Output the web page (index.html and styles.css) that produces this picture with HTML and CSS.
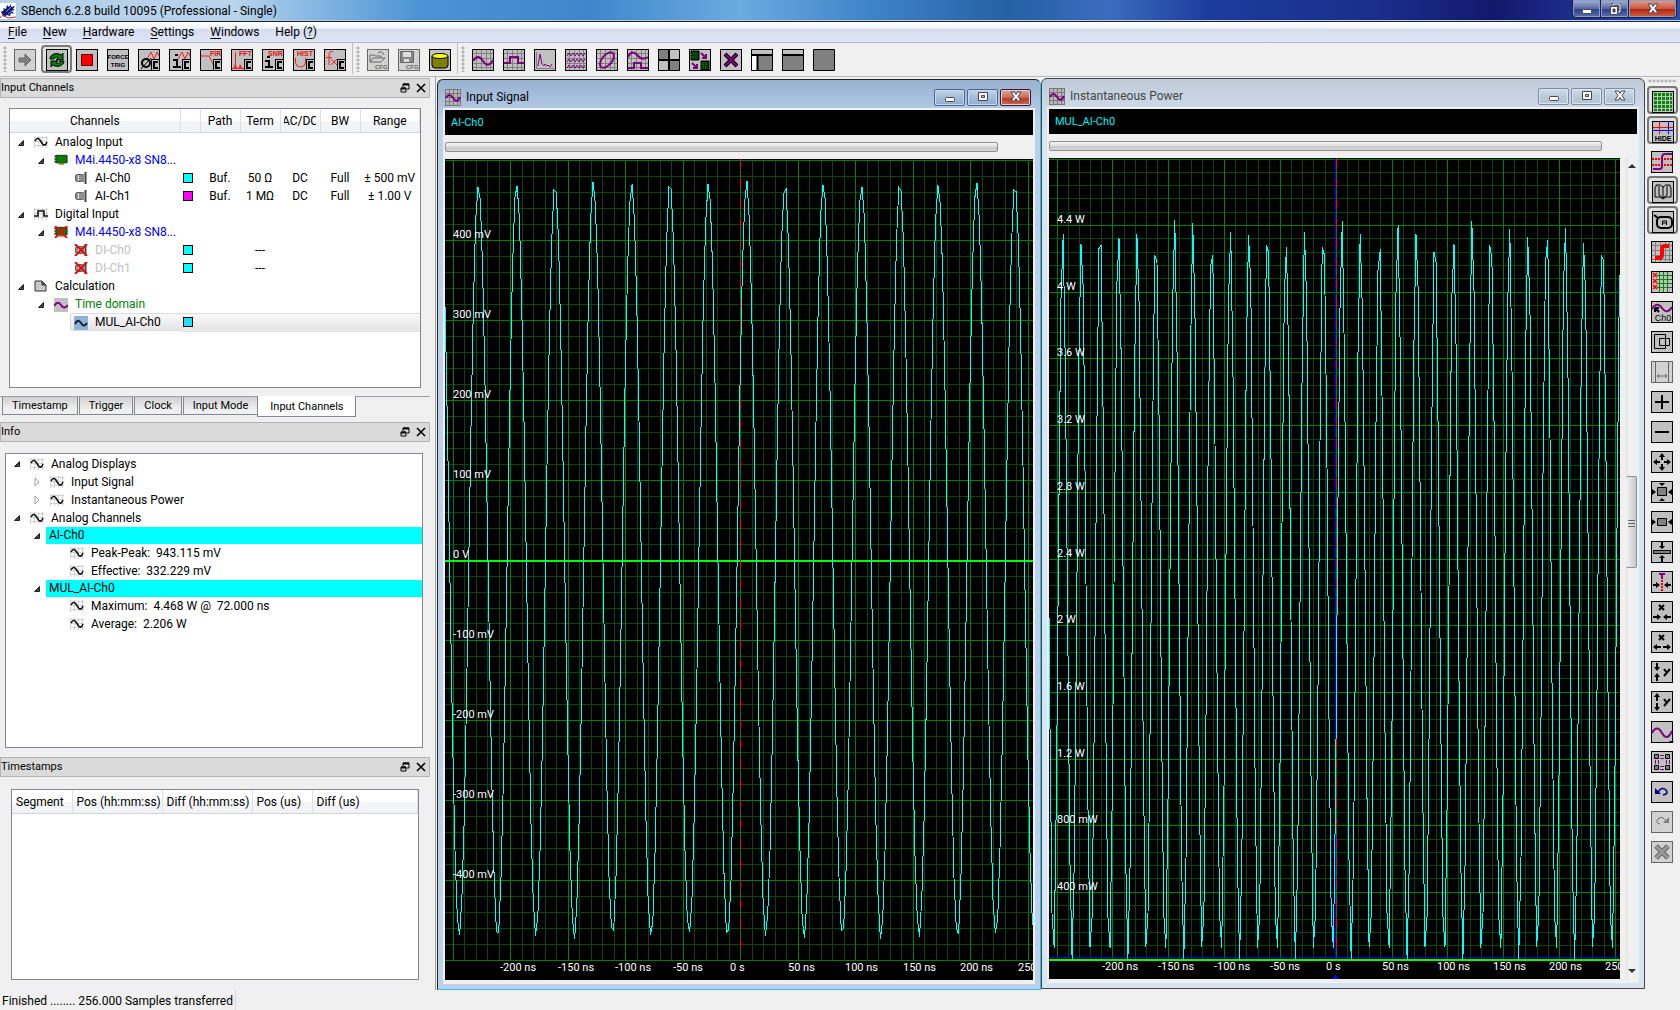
FILE: index.html
```html
<!DOCTYPE html>
<html lang="en">
<head>
<meta charset="utf-8">
<title>SBench 6.2.8 build 10095 (Professional - Single)</title>
<link rel="stylesheet" href="styles.css">
</head>
<body>
<svg class="defs" aria-hidden="true">
  <symbol id="box" viewBox="0 0 22 22"><rect x=".5" y=".5" width="21" height="21" fill="#c0c0c0" stroke="#000"/></symbol>
  <symbol id="boxd" viewBox="0 0 22 22"><rect x=".5" y=".5" width="21" height="21" fill="#d2d2d2" stroke="#666"/></symbol>
  <symbol id="gridbox" viewBox="0 0 22 22"><rect x=".5" y=".5" width="21" height="21" fill="#c0c0c0" stroke="#000"/><path d="M4.500 1v20M9.500 1v20M14.500 1v20M18.500 1v20M1 4.500h20M1 9.500h20M1 14.500h20M1 18.500h20" stroke="#808080" fill="none"/></symbol>
  <symbol id="chip" viewBox="0 0 22 22"><rect x="13.500" y="10.500" width="8" height="11" fill="#c0c0c0" stroke="#000"/><path d="M20 13h-4v6h4" stroke="#000" stroke-width="2" fill="none"/></symbol>
  <symbol id="wave" viewBox="0 0 14 12"><path d="M.5 0v12M4.500 0v12M8.500 0v12M12.500 0v12M0 1.500h14M0 5.500h14M0 9.500h14" stroke="#d0d0d0" fill="none"/><path d="M1 5Q3.500 .5 6 4L8.500 8Q11 11 13 6" stroke="#111" stroke-width="1.600" fill="none"/></symbol>
  <symbol id="square" viewBox="0 0 14 12"><path d="M.5 0v12M4.500 0v12M8.500 0v12M12.500 0v12M0 1.500h14M0 5.500h14M0 9.500h14" stroke="#d0d0d0" fill="none"/><path d="M0 8h4V3h6v5h4" stroke="#111" stroke-width="1.600" fill="none"/></symbol>
  <symbol id="card" viewBox="0 0 15 12"><path d="M0 2h3M0 5h3M0 8h3" stroke="#333"/><path d="M2 1h12v8H2z" fill="#008000" stroke="#222"/><path d="M5 10h6" stroke="#8a7a20" stroke-width="2"/></symbol>
  <symbol id="plug" viewBox="0 0 14 12"><rect x="1.500" y="2.500" width="8" height="7" rx="2" fill="#909090" stroke="#555"/><path d="M4.500 3v6" stroke="#ddd"/><path d="M8 2h2v8H8z" fill="#888"/><path d="M11.500 0v12" stroke="#444" stroke-width="2"/></symbol>
  <symbol id="cross" viewBox="0 0 14 12"><path d="M1 0L13 12M13 0L1 12" stroke="#f00808" stroke-width="2"/></symbol>
  <symbol id="doc" viewBox="0 0 14 12"><path d="M1 1h7l4 4v6H1z" fill="#c8c8c8" stroke="#333"/><path d="M8 1v4h4" fill="#555" stroke="#333"/></symbol>
  <symbol id="open" viewBox="0 0 8 8"><path d="M6.500 1.500v5h-5z" fill="#444" stroke="#222"/></symbol>
  <symbol id="shut" viewBox="0 0 8 8"><path d="M2 0l4 4-4 4z" fill="#fff" stroke="#a0a0a0"/></symbol>
  <symbol id="float" viewBox="0 0 10 10"><path d="M3 4V1h6v5H7" fill="none" stroke="#000"/><path d="M3 1.500h6M1 5.500h5" stroke="#000" stroke-width="2"/><path d="M1 5h5v4H1z" fill="none" stroke="#000"/></symbol>
  <symbol id="x" viewBox="0 0 10 10"><path d="M1 1l8 8M9 1L1 9" stroke="#000" stroke-width="1.600"/></symbol>
  <symbol id="plotwin" viewBox="0 0 16 17"><path d="M0 0h16v17H0z" fill="#b8b8b8"/><path d="M.5 0v17M4.500 0v17M8.500 0v17M12.500 0v17M15.500 0v17M0 .5h16M0 4.500h16M0 8.500h16M0 12.500h16M0 16.500h16" stroke="#777"/><path d="M1 9Q4 3 8 9T15 8" stroke="#800080" stroke-width="2" fill="none"/></symbol>
  <symbol id="wmin" viewBox="0 0 12 12"><rect x="1.500" y="6.500" width="9" height="4" rx="1" fill="#fff" stroke="#445"/></symbol>
  <symbol id="wmax" viewBox="0 0 12 12"><path d="M1.500 1.500h9v8h-9zM4.500 4.500h3v2h-3z" fill="#fff" fill-rule="evenodd" stroke="#445"/></symbol>
  <symbol id="wx" viewBox="0 0 12 12"><path d="M1 1h3.500L6 3.500 7.500 1H11L8 5.500 11 10H7.500L6 7.500 4.500 10H1l3-4.500z" fill="#fff" stroke="#445"/></symbol>
  <symbol id="wrest" viewBox="0 0 12 12"><path d="M4 3V1h7v8H9" fill="none" stroke="#445" stroke-width="3"/><path d="M4 3V1h7v8H9" fill="none" stroke="#fff"/><path d="M1.500 3.500h7v8h-7zM4 6h2v3H4z" fill="#fff" fill-rule="evenodd" stroke="#445"/></symbol>
</svg>

<div class="app">
  <header class="titlebar">
    <svg class="logo" viewBox="0 0 16 16"><path d="M0 0h16v16H0z" fill="#fff"/><path d="M1 9l3-2-1-2 3 1 1-4 2 2 2-3v3l4-1-2 3 2 1-3 1 2 3-3-1-1 3-3-1-3 2z" fill="#101878"/><path d="M6 9l5-5M8 11l5-4" stroke="#8090d0"/><path d="M0 15q3-5 6-1l3 1 7-1" stroke="#e02020" fill="none"/></svg>
    <h1>SBench 6.2.8 build 10095 (Professional - Single)</h1>
    <div class="syskeys">
      <button aria-label="Minimize"><svg width="12" height="12"><use href="#wmin"/></svg></button>
      <button aria-label="Restore"><svg width="12" height="12"><use href="#wrest"/></svg></button>
      <button class="close" aria-label="Close"><svg width="12" height="12"><use href="#wx"/></svg></button>
    </div>
  </header>

  <nav class="menubar">
    <button><u>F</u>ile</button><button><u>N</u>ew</button><button><u>H</u>ardware</button><button><u>S</u>ettings</button><button><u>W</u>indows</button><button>Help (<u>?</u>)</button>
  </nav>

  <div class="toolbar">
    <div class="group">
      <span class="grip"></span>
      <button class="tool" aria-label="Start"><svg><use href="#boxd"/><path d="M5 9h6V5l6 6-6 6v-4H5z" fill="#808080" stroke="#666"/></svg></button>
      <button class="tool on" aria-label="Loop"><svg><use href="#box"/><path d="M4 10c0-5 7-7 11-4l2-2v7h-7l2-2c-2-1-4 0-4 1z" fill="#087808" stroke="#000"/><path d="M18 12c0 5-7 7-11 4l-2 2v-6h7l-2 2c2 1 4 0 4-2z" fill="#087808" stroke="#000"/></svg></button>
      <button class="tool" aria-label="Stop"><svg><use href="#box"/><path d="M5.500 5.500h11v11h-11z" fill="#f00" stroke="#600"/></svg></button>
      <button class="tool" aria-label="Force trigger"><svg><use href="#box"/><text x="11" y="10" class="t6" text-anchor="middle">FORCE</text><text x="11" y="18" class="t6" text-anchor="middle">TRIG</text></svg></button>
      <button class="tool" aria-label="Average"><svg><use href="#box"/><path d="M9 10l4-7 3 7 3-7 2 4" class="r"/><circle cx="8" cy="14" r="4" class="k2"/><path d="M3 20L13 9" class="k"/><use href="#chip"/></svg></button>
      <button class="tool" aria-label="Signal info"><svg><use href="#box"/><path d="M9 10l4-7 3 7 3-7 2 4" class="r"/><path d="M6 6h3M4 11h4v6M4 18h8" class="k2"/><use href="#chip"/></svg></button>
      <button class="tool" aria-label="FIR filter"><svg><use href="#box"/><path d="M1 7h8l6 12" class="r"/><text x="10" y="7" class="t7 rt">FIR</text><use href="#chip"/></svg></button>
      <button class="tool" aria-label="FFT"><svg><use href="#box"/><path d="M4.500 3v17M1 19.500h12" class="r"/><path d="M2 20l2-5 3 5 2-5 3 5z" fill="#f22"/><text x="8" y="7" class="t7 rt">FFT</text><use href="#chip"/></svg></button>
      <button class="tool" aria-label="SNR"><svg><use href="#box"/><path d="M5 8h3M3 12h4v5M3 18h8" class="k2"/><text x="6" y="7" class="t7 rt">SNR</text><use href="#chip"/></svg></button>
      <button class="tool" aria-label="Histogram"><svg><use href="#box"/><path d="M2.500 9v5q1 4 5 4t5-4V9" class="r"/><text x="4" y="7" class="t7 rt">HIST</text><use href="#chip"/></svg></button>
      <button class="tool" aria-label="Function"><svg><use href="#box"/><path d="M9 3q-4-2-4 3v10M2 8.500h6M7 10l6 6M13 10l-6 6" class="r"/><use href="#chip"/></svg></button>
    </div>
    <div class="group">
      <span class="grip"></span>
      <button class="tool" aria-label="Load configuration"><svg><use href="#boxd"/><path d="M3 13V6h4l1 1h6v2M3 13l3-4h12l-4 4zM11 4q4-3 6 2" class="d"/><text x="8" y="20" class="t6 dt">CFG</text></svg></button>
      <button class="tool" aria-label="Save configuration"><svg><use href="#boxd"/><path d="M2.500 2.500h13v11h-13z" fill="#888" stroke="#666"/><path d="M5 3h8v5H5zM6 10h5v3H6z" fill="#ddd"/><text x="8" y="20" class="t6 dt">CFG</text></svg></button>
      <button class="tool" aria-label="Archive"><svg><use href="#box"/><path d="M3 7v9q0 3 3 3h10q3 0 3-3V7z" fill="#808000" stroke="#000"/><ellipse cx="11" cy="7" rx="8" ry="2.500" fill="#ff0" stroke="#000"/></svg></button>
    </div>
    <div class="group last">
      <span class="grip"></span>
      <button class="tool" aria-label="Analog display"><svg><use href="#gridbox"/><path d="M1 12Q6 4 11 12T21 11" class="p2"/></svg></button>
      <button class="tool" aria-label="Digital display"><svg><use href="#gridbox"/><path d="M1 14h6V8h8v6h6" class="p2"/></svg></button>
      <button class="tool" aria-label="Spectrum display"><svg><use href="#box"/><path d="M2.500 3v16.500H20" stroke="#808080" fill="none"/><path d="M4 17l2-12 2 10 2 2 1-2 2 2 1-1 2 2 2-3" class="p"/></svg></button>
      <button class="tool" aria-label="Multi display"><svg><use href="#gridbox"/><path d="M2 7l2-3 2 3 2-3 2 3 2-3 2 3 2-3 2 3 2-3M2 13l2-3 2 3 2-3 2 3 2-3 2 3 2-3 2 3 2-3M2 19l2-3 2 3 2-3 2 3 2-3 2 3 2-3 2 3 2-3" class="p"/></svg></button>
      <button class="tool" aria-label="XY display"><svg><use href="#gridbox"/><ellipse cx="11" cy="11" rx="9" ry="5" transform="rotate(-50 11 11)" class="p2"/></svg></button>
      <button class="tool" aria-label="Mixed display"><svg><use href="#gridbox"/><path d="M1 8Q5 0 10 6t11 2M1 19h6v-5h7v5h7" class="p2"/></svg></button>
      <button class="tool" aria-label="Tile windows"><svg><use href="#box"/><path d="M1 1h9v9H1zM12 12h9v9h-9z" fill="#808080"/><path d="M11 0v22M0 11h22" class="k2"/></svg></button>
      <button class="tool" aria-label="Cascade windows"><svg><use href="#box"/><path d="M2 2h8v9H2zM12 12h8v9h-8z" fill="#002800" stroke="#000"/><path d="M4 3v7M7 3v7M14 13v7M17 13v7M2 5h8M2 8h8M12 15h8M12 18h8" stroke="#080" stroke-dasharray="1 1"/><path d="M12 4l5 5m0-4v4h-4M3 14l5 5m0-4v4H4" class="p2"/></svg></button>
      <button class="tool" aria-label="Close windows"><svg><use href="#box"/><path d="M5 5l12 12M17 5L5 17" stroke="#000" stroke-width="4"/><path d="M5 5l12 12M17 5L5 17" class="p2"/></svg></button>
      <button class="tool" aria-label="Layout with side bar"><svg><use href="#box"/><path d="M7 7h14v14H7z" fill="#808080"/><path d="M1 7h5v14H1z" fill="#fff"/><path d="M1 6h20M6.500 6v15" class="k2"/></svg></button>
      <button class="tool" aria-label="Layout with top bar"><svg><use href="#box"/><path d="M1 7h20v14H1z" fill="#808080"/><path d="M1 6h20" class="k2"/></svg></button>
      <button class="tool" aria-label="Full layout"><svg><path d="M.5 .5h21v21H.5z" fill="#808080" stroke="#000"/></svg></button>
    </div>
  </div>

  <main class="work">
    <aside class="docks">
      <section>
        <div class="docktitle"><h2>Input Channels</h2><button aria-label="Float"><svg><use href="#float"/></svg></button><button aria-label="Close"><svg><use href="#x"/></svg></button></div>
        <div class="frame channels">
          <table>
            <colgroup><col class="cname"><col class="ccol"><col class="c40"><col class="c40"><col class="c40"><col class="c40"><col></colgroup>
            <thead><tr><th>Channels</th><th></th><th>Path</th><th>Term</th><th><span class="clip">AC/DC</span></th><th>BW</th><th>Range</th></tr></thead>
            <tbody>
              <tr class="spacer"><td colspan="7"></td></tr>
              <tr><td class="l0"><svg class="ar"><use href="#open"/></svg><svg class="ic"><use href="#wave"/></svg>Analog Input</td><td colspan="6"></td></tr>
              <tr><td class="l1 blue"><svg class="ar"><use href="#open"/></svg><svg class="ic"><use href="#card"/></svg>M4i.4450-x8 SN8...</td><td colspan="6"></td></tr>
              <tr><td class="l2"><svg class="ic"><use href="#plug"/></svg>AI-Ch0</td><td><i class="sw"></i></td><td>Buf.</td><td>50 Ω</td><td>DC</td><td>Full</td><td>± 500 mV</td></tr>
              <tr><td class="l2"><svg class="ic"><use href="#plug"/></svg>AI-Ch1</td><td><i class="sw magenta"></i></td><td>Buf.</td><td>1 MΩ</td><td>DC</td><td>Full</td><td>± 1.00 V</td></tr>
              <tr><td class="l0"><svg class="ar"><use href="#open"/></svg><svg class="ic"><use href="#square"/></svg>Digital Input</td><td colspan="6"></td></tr>
              <tr><td class="l1 blue"><svg class="ar"><use href="#open"/></svg><svg class="ic"><use href="#card"/><use href="#cross"/></svg>M4i.4450-x8 SN8...</td><td colspan="6"></td></tr>
              <tr><td class="l2 off"><svg class="ic"><use href="#plug"/><use href="#cross"/></svg>DI-Ch0</td><td><i class="sw"></i></td><td></td><td>---</td><td></td><td></td><td></td></tr>
              <tr><td class="l2 off"><svg class="ic"><use href="#plug"/><use href="#cross"/></svg>DI-Ch1</td><td><i class="sw"></i></td><td></td><td>---</td><td></td><td></td><td></td></tr>
              <tr><td class="l0"><svg class="ar"><use href="#open"/></svg><svg class="ic"><use href="#doc"/></svg>Calculation</td><td colspan="6"></td></tr>
              <tr><td class="l1 green"><svg class="ar"><use href="#open"/></svg><svg class="ic tile"><path d="M0 8Q4 2 7 7t7 0" class="p2"/></svg>Time domain</td><td colspan="6"></td></tr>
              <tr class="sel"><td class="l2"><div><svg class="ic tile seltile"><path d="M1 8Q4 2 7 7t6 0" stroke="#123" stroke-width="2" fill="none"/></svg>MUL_AI-Ch0</div></td><td><i class="sw picked"></i></td><td colspan="5"></td></tr>
            </tbody>
          </table>
        </div>
        <div class="tabs" role="tablist"><button role="tab">Timestamp</button><button role="tab">Trigger</button><button role="tab">Clock</button><button role="tab">Input Mode</button><button role="tab" aria-selected="true">Input Channels</button></div>
      </section>

      <section>
        <div class="docktitle"><h2>Info</h2><button aria-label="Float"><svg><use href="#float"/></svg></button><button aria-label="Close"><svg><use href="#x"/></svg></button></div>
        <ul class="frame info">
          <li class="l0"><svg class="ar"><use href="#open"/></svg><svg class="ic"><use href="#wave"/></svg>Analog Displays</li>
          <li class="l1"><svg class="ar"><use href="#shut"/></svg><svg class="ic"><use href="#wave"/></svg>Input Signal</li>
          <li class="l1"><svg class="ar"><use href="#shut"/></svg><svg class="ic"><use href="#wave"/></svg>Instantaneous Power</li>
          <li class="l0"><svg class="ar"><use href="#open"/></svg><svg class="ic"><use href="#wave"/></svg>Analog Channels</li>
          <li class="l1 ch"><svg class="ar"><use href="#open"/></svg><span>AI-Ch0</span></li>
          <li class="l2"><svg class="ic"><use href="#wave"/></svg>Peak-Peak:&nbsp; 943.115 mV</li>
          <li class="l2"><svg class="ic"><use href="#wave"/></svg>Effective:&nbsp; 332.229 mV</li>
          <li class="l1 ch"><svg class="ar"><use href="#open"/></svg><span>MUL_AI-Ch0</span></li>
          <li class="l2"><svg class="ic"><use href="#wave"/></svg>Maximum:&nbsp; 4.468 W @&nbsp; 72.000 ns</li>
          <li class="l2"><svg class="ic"><use href="#wave"/></svg>Average:&nbsp; 2.206 W</li>
        </ul>
      </section>

      <section>
        <div class="docktitle"><h2>Timestamps</h2><button aria-label="Float"><svg><use href="#float"/></svg></button><button aria-label="Close"><svg><use href="#x"/></svg></button></div>
        <div class="frame stamps">
          <table>
            <colgroup><col class="c60"><col class="c90"><col class="c90"><col class="c60"><col></colgroup>
            <thead><tr><th>Segment</th><th>Pos (hh:mm:ss)</th><th>Diff (hh:mm:ss)</th><th>Pos (us)</th><th>Diff (us)</th></tr></thead>
          </table>
        </div>
      </section>
    </aside>

    <div class="mdi">
      <section class="win active">
        <div class="wintitle"><svg class="wi"><use href="#plotwin"/></svg><h2>Input Signal</h2>
          <button aria-label="Minimize"><svg><use href="#wmin"/></svg></button><button aria-label="Maximize"><svg><use href="#wmax"/></svg></button><button class="close" aria-label="Close"><svg><use href="#wx"/></svg></button></div>
        <div class="content">
          <div class="legend">AI-Ch0</div>
          <div class="hbar"></div>
          <div class="plotrow"><div class="plot" id="signal"></div></div>
        </div>
      </section>
      <section class="win">
        <div class="wintitle"><svg class="wi"><use href="#plotwin"/></svg><h2>Instantaneous Power</h2>
          <button aria-label="Minimize"><svg><use href="#wmin"/></svg></button><button aria-label="Maximize"><svg><use href="#wmax"/></svg></button><button aria-label="Close"><svg><use href="#wx"/></svg></button></div>
        <div class="content">
          <div class="legend">MUL_AI-Ch0</div>
          <div class="hbar"></div>
          <div class="plotrow"><div class="plot" id="power"></div>
            <div class="vbar"><svg viewBox="0 0 10 6"><path d="M1 5l4-4 4 4z" fill="#333"/></svg><span class="thumb"></span><svg viewBox="0 0 10 6"><path d="M1 1l4 4 4-4z" fill="#333"/></svg></div></div>
        </div>
      </section>
    </div>

    <div class="sidebar">
      <span class="grip"></span>
      <button class="tool on" aria-label="Grid"><svg><use href="#box"/><path d="M2 2h18v18H2z" fill="#008a00"/><path d="M5.500 1v20M9.500 1v20M13.500 1v20M17.500 1v20M1 5.500h20M1 9.500h20M1 13.500h20M1 17.500h20" stroke="#c0c0c0"/></svg></button>
      <button class="tool on" aria-label="Hide cursors"><svg><use href="#box"/><path d="M1 6.500h20M7.500 1v12" stroke="#f00"/><path d="M1 9.500h20M16.500 1v12" stroke="#00f"/><text x="11" y="20" class="t7" text-anchor="middle">HIDE</text></svg></button>
      <button class="tool" aria-label="Trigger level"><svg><use href="#box"/><path d="M1 8h20M1 14h20" stroke="#f00" stroke-width="2" stroke-dasharray="2 1"/><path d="M2 18h7q2 0 2-3V7q0-4 3-4h7" class="p2"/></svg></button>
      <button class="tool on" aria-label="Legend"><svg><use href="#box"/><path d="M3 16V7q0-1 1-1V4q5-1 7 2 2-3 7-2v2q1 0 1 1v9h-5l-3 2-3-2zM11 6v11M7 5v9l4 3 4-3V5" class="k"/></svg></button>
      <button class="tool on" aria-label="Auto label"><svg><use href="#box"/><rect x="5" y="6" width="15" height="11" rx="4" class="k2"/><path d="M2 4l4 3" class="k2"/><path d="M10.500 14v-4h4v4M10.500 12h4" class="k"/></svg></button>
      <button class="tool" aria-label="Interpolation"><svg><use href="#gridbox"/><path d="M4 17h4q3 0 3-3V8q0-3 3-3h4" stroke="#f00" stroke-width="4" fill="none"/></svg></button>
      <button class="tool" aria-label="Clear markers"><svg><use href="#box"/><path d="M8.500 1v20M12.500 1v20M16.500 1v20M6 4.500h15M6 8.500h15M6 12.500h15M6 16.500h15" stroke="#080"/><path d="M2 2l4 4M6 2L2 6M2 8l4 4M6 8l-4 4M2 14l4 4M6 14l-4 4" stroke="#f00" stroke-width="1.500"/></svg></button>
      <button class="tool" aria-label="Select channel"><svg><use href="#box"/><path d="M1 8Q6 0 11 7t10-1" class="p2"/><path d="M4 7h4M4 7v4M4 7l4 4" class="k2"/><text x="12" y="20" class="t8" text-anchor="middle">Ch0</text></svg></button>
      <button class="tool" aria-label="Overlay"><svg><use href="#box"/><path d="M3.500 3.500h11v14h-11zM8.500 7.500h10v7h-10z" class="k"/></svg></button>
      <button class="tool" aria-label="Fit width"><svg><use href="#boxd"/><path d="M4.500 1v20M17.500 1v20M6 15h10M8 13l-2 2 2 2M14 13l2 2-2 2" class="d"/></svg></button>
      <button class="tool" aria-label="Zoom in"><svg><use href="#box"/><path d="M11 4v14M4 11h14" class="k2"/></svg></button>
      <button class="tool" aria-label="Zoom out"><svg><use href="#box"/><path d="M4 11h14" class="k2"/></svg></button>
      <button class="tool" aria-label="Move"><svg><use href="#box"/><path d="M11 3v6M11 13v6M3 11h6M13 11h6" class="k2"/><path d="M8 6l3-4 3 4zM8 16l3 4 3-4zM6 8l-4 3 4 3zM16 8l4 3-4 3z"/></svg></button>
      <button class="tool" aria-label="Fit all"><svg><use href="#box"/><path d="M6.500 6.500h9v8h-9z" fill="#808080" stroke="#000"/><path d="M8 2h6l-3 3zM8 20h6l-3-3zM1 8v6l4-3zM21 8v6l-4-3z"/></svg></button>
      <button class="tool" aria-label="Fit horizontal"><svg><use href="#box"/><path d="M6.500 7.500h9v7h-9z" fill="#808080" stroke="#000"/><path d="M1 8v6l4-3zM21 8v6l-4-3z"/></svg></button>
      <button class="tool" aria-label="Fit vertical"><svg><use href="#box"/><path d="M2.500 9.500h17v3h-17z" fill="#808080" stroke="#000"/><path d="M11 1v4M11 17v4" class="k2"/><path d="M8 5h6l-3 3zM8 17h6l-3-3z"/></svg></button>
      <button class="tool" aria-label="Center trigger"><svg><use href="#box"/><path d="M8 3h6M11 3v5" class="p2"/><path d="M11 9v12" stroke="#f00" stroke-width="2" stroke-dasharray="2 1"/><path d="M2 14h4M16 14h4" class="k2"/><path d="M5 11l4 3-4 3zM17 11l-4 3 4 3z"/></svg></button>
      <button class="tool" aria-label="Compress X"><svg><use href="#box"/><path d="M8 4l5 5M13 4L8 9M2 16h5M15 16h5" class="k2"/><path d="M6 13l4 3-4 3zM16 13l-4 3 4 3z"/></svg></button>
      <button class="tool" aria-label="Expand X"><svg><use href="#box"/><path d="M8 4l5 5M13 4L8 9M5 16h5M12 16h5" class="k2"/><path d="M6 13l-4 3 4 3zM16 13l4 3-4 3z"/></svg></button>
      <button class="tool" aria-label="Compress Y"><svg><use href="#box"/><path d="M13 8l3 4M19 8l-6 7M6 2v4M6 16v4" class="k2"/><path d="M3 6h6l-3 4zM3 16h6l-3-4z"/></svg></button>
      <button class="tool" aria-label="Expand Y"><svg><use href="#box"/><path d="M13 8l3 4M19 8l-6 7M6 5v5M6 12v5" class="k2"/><path d="M3 6h6l-3-4zM3 16h6l-3 4z"/></svg></button>
      <button class="tool" aria-label="Waveform style"><svg><use href="#box"/><path d="M1 12Q6 3 11 12t10-2" class="p2"/><path d="M18 20h5l-2.500 2z"/></svg></button>
      <button class="tool" aria-label="Link displays"><svg><use href="#box"/><path d="M3.500 3.500h4v4h-4zM14.500 3.500h4v4h-4zM3.500 14.500h4v4h-4zM14.500 14.500h4v4h-4z" fill="#808080" stroke="#000"/><path d="M9 4.500h4M9 7.500h4M9 15.500h4M9 18.500h4M4.500 9v4M7.500 9v4M15.500 9v4M18.500 9v4" class="p"/></svg></button>
      <button class="tool" aria-label="Undo"><svg><use href="#box"/><path d="M7 11q4-6 8-2 3 4-3 5" stroke="#000080" stroke-width="1.500" fill="none"/><path d="M4 7v6h6z" fill="#000080"/></svg></button>
      <button class="tool" aria-label="Redo"><svg><use href="#boxd"/><path d="M15 10q-4-6-8-2-3 4 2 5" class="d"/><path d="M18 6v6h-6z" fill="#808080"/></svg></button>
      <button class="tool" aria-label="Delete"><svg><use href="#boxd"/><path d="M5 5l12 12M17 5L5 17" stroke="#666" stroke-width="5"/><path d="M5 5l12 12M17 5L5 17" stroke="#999" stroke-width="3"/></svg></button>
    </div>
  </main>

  <footer class="status"><span>Finished ........ 256.000 Samples transferred</span></footer>
</div>
<script src="plot.js"></script>
</body>
</html>
```
FILE: styles.css
```css
* { box-sizing: border-box; }
body { margin: 0; font: 12px/18px Roboto, "Noto Sans", sans-serif; color: #000; background: #f0f0f0; }
h1, h2 { margin: 0; font: inherit; }
button { margin: 0; padding: 0; border: 0; background: none; font: inherit; color: inherit; }
svg { display: block; flex: none; }
.defs { position: absolute; width: 0; height: 0; }
.app { display: flex; flex-direction: column; height: 100vh; min-height: 900px; overflow: hidden; }

/* title and menu */
.titlebar { display: flex; align-items: center; height: 22px; flex: none; border-bottom: 1px solid #1c2438; box-shadow: inset 0 -1px #b8cce8;
  background: linear-gradient(90deg, #b4cfe8 0, #b9d3ec 14%, #8cbbe4 18%, #4b93d4 25%, #3f86cc 35%, #6aabe0 44%, #3f83c8 52%, #2560a4 60%, #3c6cc0 66%, #1c3c9c 72%, #1a2e8c 82%, #14186c 89%, #20389c 96%, #2c50a4 100%); }
.logo { width: 16px; height: 16px; margin-right: 5px; }
.titlebar h1 { flex: 1; line-height: 20px; }
.syskeys { display: flex; align-self: flex-start; height: 18px; margin-right: 3px; border: 1px solid #1a2040; border-top: 0; border-radius: 0 0 5px 5px; overflow: hidden; }
.syskeys button { display: grid; place-items: center; width: 28px; background: linear-gradient(#a8b4d8, #5868a4 50%, #2c3c84 51%, #5a70b0); border-right: 1px solid #1a2040; box-shadow: inset 0 0 0 1px #8c9cc8; }
.syskeys .close { width: 47px; border: 0; background: linear-gradient(#e0a090, #cc5840 50%, #a82410 51%, #d86040); }
.menubar { display: flex; flex: none; height: 21px; border-bottom: 1px solid #b4b8d0; background: linear-gradient(#fff 0, #f0f3fa 32%, #d5dcee 34%, #e0e6f5 100%); }
.menubar button { padding: 0 8px; line-height: 20px; }
.menubar u { text-underline-offset: 2px; }

/* toolbars */
.toolbar { display: flex; flex: none; height: 34px; padding-bottom: 2px; border-bottom: 1px solid #b8b8b8; }
.group { display: flex; align-items: center; padding-right: 1px; border-right: 1px solid #c0c0c0; }
.group.last { border: 0; }
.grip { width: 10px; height: 26px; flex: none; background: radial-gradient(circle, #b4b4b4 1px, transparent 2px) 3px 0 / 4px 4px repeat-y; }
.tool { width: 31px; height: 28px; padding: 3px 0 0 4px; flex: none; }
.tool svg { width: 22px; height: 22px; overflow: visible; }
.tool.on { padding: 2px 0 0 3px; border: 2px solid #787878; border-radius: 4px; background: #e2e2e2; }
.r, .k, .k2, .p, .p2, .d { fill: none; }
.r { stroke: #f22020; }
.k { stroke: #000; }
.k2 { stroke: #000; stroke-width: 2; }
.p { stroke: #800080; }
.p2 { stroke: #800080; stroke-width: 2; }
.d { stroke: #666; }
.t6, .t7, .t8 { font: bold 7px "Liberation Sans", sans-serif; }
.t6 { font-size: 6px; }
.t8 { font-size: 9px; font-weight: normal; }
.rt { fill: #e81010; }
.dt { fill: #666; }
.sidebar { display: flex; flex-direction: column; width: 35px; }
.sidebar .grip { width: auto; height: 9px; margin: 0 3px; background: radial-gradient(circle, #b4b4b4 1px, transparent 2px) 0 2px / 4px 4px repeat-x; }
.sidebar .tool { margin: 0 0 2px 2px; }
.sidebar .tool.on { padding-top: 3px; }

/* docks */
.work { display: grid; grid-template-columns: 435px minmax(0, 1fr) 35px; flex: 1; min-height: 0; }
.docks { display: grid; grid-template-columns: minmax(0, 1fr); grid-template-rows: 20px minmax(0, 298fr) 26px 20px minmax(0, 315fr) 20px minmax(0, 213fr); padding: 1px 5px 0 0; min-height: 0; }
.docks section { display: contents; }
.docktitle { display: flex; align-items: center; gap: 6px; padding: 0 3px 0 0; border: 1px solid #b4b4b4; background: #dadada; }
.docktitle h2 { flex: 1; font-size: 11px; }
.docktitle svg { width: 10px; height: 10px; }
.frame { margin: 0; border: 1px solid #828790; background: #fff; overflow: hidden; }
.channels { margin: 10px 9px 8px; }
.info { margin: 11px 7px 9px 5px; padding: 1px 0 0; list-style: none; }
.stamps { margin: 12px 11px 10px; }
table { width: 100%; border-collapse: collapse; table-layout: fixed; }
.cname { width: 170px; } .ccol { width: 20px; } .c40 { width: 40px; } .c60 { width: 60px; } .c90 { width: 90px; }
th { height: 23px; padding: 1px 0 0; border-right: 1px solid #e0e0e4; border-bottom: 1px solid #d5d5d5; background: linear-gradient(#fff 50%, #f4f5f7 51%, #f0f2f5); font-weight: normal; white-space: nowrap; overflow: hidden; }
.stamps th { padding-left: 4px; text-align: left; }
.clip { display: flex; justify-content: center; width: 32px; margin: 0 auto; overflow: hidden; }
td { height: 18px; padding: 0; text-align: center; white-space: nowrap; }
.spacer td { height: 1px; }
td:first-child { text-align: left; }
.channels td svg { display: inline-block; vertical-align: -2px; }
.ar { width: 8px; height: 8px; margin-right: 9px; }
.ic { width: 14px; height: 12px; margin-right: 7px; }
.channels td.l0 { padding-left: 7px; }
.channels td.l1 { padding-left: 27px; }
.channels td.l2 { padding-left: 64px; }
.channels .ar { vertical-align: -1px; }
.blue { color: #00f; } .green { color: #008000; } .off { color: #c0c0c0; }
.channels .tile { height: 14px; background: #c0c0c0; vertical-align: -4px; }
.channels .seltile { background: #8fb2d8; }
.sw { display: block; width: 10px; height: 10px; margin-left: 3px; border: 1px solid #000; background: #0ff; }
.magenta { background: #f0f; }
.picked { background: #20e0ff; }
.channels .sel td { padding-left: 0; background: linear-gradient(#fafafa, #e4e4e4); border: solid #dcdcdc; border-width: 1px 0; line-height: 16px; }
.channels .sel td:first-child { background: none; border: 0; padding-left: 60px; }
.sel div { padding-left: 3px; background: linear-gradient(#fafafa, #e4e4e4); border: 1px solid #dcdcdc; border-right: 0; border-radius: 3px 0 0 3px; }
.tabs { display: flex; align-items: flex-start; padding-left: 2px; border-top: 1px solid #a0a0a0; font-size: 11px; }
.tabs button { height: 18px; margin-right: 1px; padding: 0 9px; border: 1px solid #828790; border-top: 0; background: linear-gradient(#cfcfcf, #f0f0f0 70%); line-height: 17px; }
.tabs [aria-selected] { height: 21px; margin: -1px 0 0 -2px; padding: 0 12px; background: #fff; line-height: 21px; }
.info li { display: flex; align-items: center; height: 18px; white-space: nowrap; }
.info .l0 { padding-left: 7px; }
.info .l1 { padding-left: 27px; }
.info .l2 { padding-left: 64px; }
.info .ch { height: 17px; }
.info .ch .ar { margin-right: 5px; }
.ch span { flex: 1; padding-left: 3px; background: #0ff; line-height: 17px; }

/* document windows */
.mdi { display: flex; min-width: 0; min-height: 0; padding-left: 1px; border-left: 1px solid #a0a0a0; }
.win { display: flex; flex-direction: column; flex: 1; min-width: 0; margin: 1px 0 1px; padding: 0 5px 5px; border: 1px solid #444; border-radius: 6px 6px 0 0; background: linear-gradient(#bfcbd8 0, #d7e4f2 50px); }
.win.active { margin: 2px 0 0; border-color: #222 #30c0e0 #30c0e0 #222; background: linear-gradient(#98b1d0 0, #b9d1ea 40px); }
.wintitle { display: flex; align-items: center; gap: 2px; height: 28px; flex: none; padding: 9px 4px 3px 2px; color: #444; }
.active .wintitle { color: #000; }
.wi { width: 16px; height: 17px; margin-right: 3px; }
.wintitle h2 { flex: 1; }
.wintitle button { display: grid; place-items: center; width: 31px; height: 17px; border: 1px solid #7c8ca8; border-radius: 2px; background: linear-gradient(#d0dce8, #bccad8 50%, #b4c4d4); box-shadow: inset 0 0 0 1px #dce6f0; }
.wintitle button svg { width: 12px; height: 12px; }
.active .wintitle button { border-color: #4c6890; background: linear-gradient(#c4d4e8, #a4bcd8 50%, #90acd0); box-shadow: inset 0 0 0 1px #c8d8ec; }
.active .wintitle .close { border-color: #501020; background: linear-gradient(#e4a898, #cc6850 50%, #b83820 51%, #cc6850); }
.content { display: flex; flex-direction: column; flex: 1; min-height: 0; padding: 2px 2px 4px; background: #f0f0f0; gap: 7px; }
.legend { height: 25px; flex: none; padding-left: 6px; background: #000; color: #00f0f0; font-size: 11px; line-height: 26px; }
.hbar { height: 10px; flex: none; margin-right: 35px; border: 1px solid #909090; border-radius: 2px; background: linear-gradient(#f4f4f4, #e4e4e4 40%, #c8c8c8 60%, #d8d8d8); }
.plotrow { display: flex; flex: 1; gap: 6px; min-height: 0; }
.plot { position: relative; flex: 1; min-width: 0; background: #000; overflow: hidden; color: #fff; font-size: 11px; }
.plot svg { position: absolute; inset: 0; width: 100%; height: 100%; }
.plot span { position: absolute; line-height: 14px; white-space: nowrap; }
.minor { stroke: #0b450b; }
.major { stroke: #008000; }
.zero { stroke: #0f0; stroke-width: 2; }
.trig { stroke: #f00; stroke-dasharray: 10 10; }
.cursor { stroke: #00f; }
.trace { stroke: #0ff; fill: none; }
.vbar { display: flex; flex-direction: column; align-items: center; justify-content: space-between; width: 11px; padding: 5px 0; background: linear-gradient(90deg, #e2e2e2, #f2f2f2 30%, #eee); }
.vbar svg { width: 10px; height: 6px; }
.vbar .thumb { width: 100%; height: 92px; margin-bottom: 94px; border: 1px solid #909090; border-left: 0; border-radius: 2px; background: linear-gradient(#666, #666) 50% 49px / 7px 1px no-repeat, linear-gradient(#666, #666) 50% 46px / 7px 1px no-repeat, linear-gradient(#666, #666) 50% 43px / 7px 1px no-repeat, linear-gradient(90deg, #f4f4f4, #c8c8c8); }

.status { display: flex; height: 20px; flex: none; }
.status span { padding: 0 2px; border-right: 1px solid #d8d8d8; line-height: 22px; }
```
FILE: plot.js
```js
// Time axis shared by both displays, in ns.
const T_MIN = -257.2, T_MAX = 254.2, AXIS = 20;
const PERIOD = 100 / 3, PEAK = 5.17;

function lineAt(cls, x1, y1, x2, y2) {
  return `<line class="${cls}" x1="${x1}" y1="${y1}" x2="${x2}" y2="${y2}"/>`;
}

function draw(id, o) {
  const el = document.getElementById(id);
  const w = el.clientWidth, h = el.clientHeight, bottom = h - AXIS;
  const X = t => (t - T_MIN) / (T_MAX - T_MIN) * w;
  const Y = v => 1 + (o.max - v) / (o.max - o.min) * (bottom - 1);
  const snap = n => Math.floor(n) + 0.5;
  let minor = '', major = '', labels = '';

  for (let t = -250; t <= 250; t += 10) {
    const x = snap(X(t));
    if (t % 50) minor += lineAt('minor', x, 1, x, bottom);
    else {
      major += lineAt('major', x, 1, x, bottom);
      if (t > -250) labels += `<span style="left:${Math.round(x - 11)}px;bottom:5px">${t ? t + ' ns' : '0 s'}</span>`;
    }
  }
  const rows = Math.round((o.max - o.min) / o.step * 5);
  for (let i = 0; i <= rows; i++) {
    const v = o.min + i * o.step / 5, y = snap(Y(v));
    if (i % 5) minor += lineAt('minor', 0, y, w, y);
    else {
      const zero = Math.abs(v) < 1e-6;
      major += lineAt(zero ? 'zero' : 'major', 0, zero ? y + 0.5 : y, w, zero ? y + 0.5 : y);
      if (i && i < rows && (o.min < 0 || !zero)) labels += `<span style="left:8px;top:${Math.round(y - 13)}px">${o.label(v)}</span>`;
    }
  }

  // Acquired at 500 MS/s: one sample every 2 ns.
  let pts = '';
  for (let t = -258.5; t < 258; t += 2) pts += `${X(t).toFixed(1)},${Y(o.value(t)).toFixed(1)} `;

  const x0 = snap(X(0));
  let marks = lineAt('trig', x0, 0, x0, bottom);
  if (o.cursor) {
    marks += lineAt('cursor', x0 - 1, 0, x0 - 1, bottom) + lineAt('cursor', 0, bottom - 1.5, w, bottom - 1.5)
      + `<path fill="#00f" d="M${x0 - 5} ${h}l4-4 4 4z"/>`;
  }
  el.innerHTML = `<svg shape-rendering="crispEdges">${minor}${major}${marks}<polyline class="trace" points="${pts}"/></svg>${labels}`;
}

// Small amplitude ripple of the digitised signal.
const ripple = t => 1 + 0.006 * Math.sin(t * 1.3) + 0.005 * Math.sin(t * 0.47);

function render() {
  draw('signal', {
    min: -500, max: 500, step: 100,
    value: t => 471 * ripple(t) * Math.cos(2 * Math.PI * (t - PEAK) / PERIOD),
    label: v => Math.abs(v) < 1e-6 ? '0 V' : Math.round(v) + ' mV'
  });
  draw('power', {
    min: 0, max: 4.8, step: 0.4, cursor: true,
    value: t => 4.38 * Math.pow(ripple(t), 2) * Math.pow(Math.cos(2 * Math.PI * (t - PEAK) / PERIOD), 2),
    label: v => v < 0.99 ? Math.round(v * 1000) + ' mW' : +v.toFixed(1) + ' W'
  });
}
render();
addEventListener('resize', render);
```
